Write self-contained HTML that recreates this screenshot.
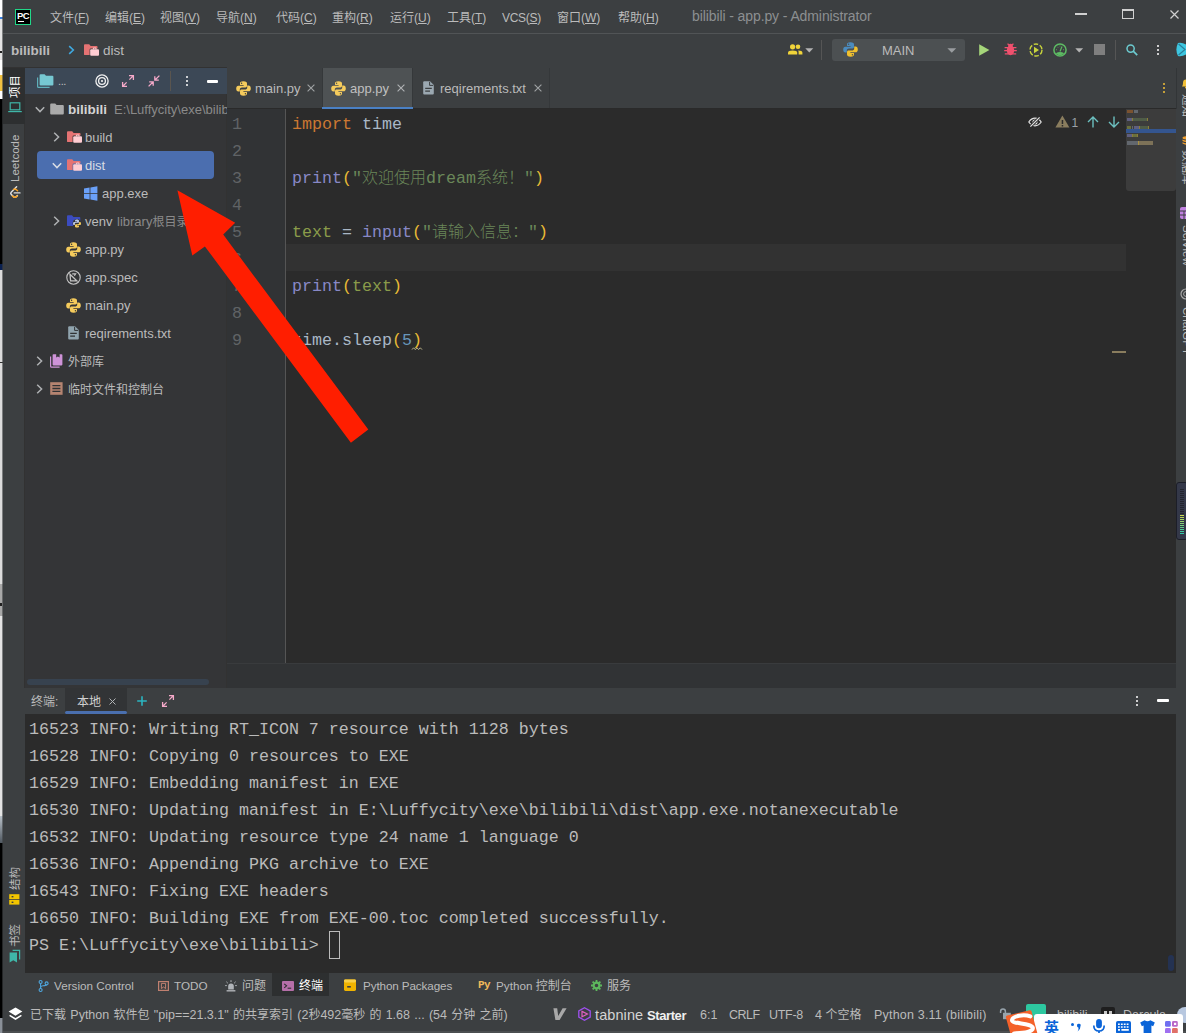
<!DOCTYPE html>
<html lang="zh-CN">
<head>
<meta charset="utf-8">
<title>bilibili - app.py - Administrator</title>
<style>
*{box-sizing:border-box;margin:0;padding:0}
html,body{width:1186px;height:1033px;overflow:hidden;background:#3c3f41}
body{position:relative;font-family:"Liberation Sans","Noto Sans CJK SC",sans-serif;font-size:13px;color:#bbbbbb}
.abs{position:absolute}
.t{position:absolute;white-space:nowrap;line-height:1}
svg{position:absolute;overflow:visible}
.mono{font-family:"Liberation Mono","Noto Sans CJK SC",monospace}
.m{font-size:12px;color:#bbbbbb}
.m u{text-decoration:underline;text-underline-offset:1px}
.v{transform-origin:0 0;transform:rotate(-90deg);line-height:12px;height:12px}
.f{font-size:13px;color:#bbbbbb}
.c{font-size:12px}
.ln{font-size:16.67px;line-height:27px;color:#606366}
.cl{font-size:16.67px;line-height:27px;color:#a9b7c6;white-space:pre}
.cj{font-family:"Noto Sans CJK SC",sans-serif;font-size:16px;font-weight:300;line-height:0}
.tl{font-size:16.67px;line-height:27px;color:#bbbbbb;white-space:pre}
.b{font-size:11.7px;color:#bbbbbb}
.s{font-size:12.5px;color:#bbbbbb}
.rv{transform-origin:0 0;transform:rotate(90deg);line-height:12px;height:12px;font-size:11.5px;color:#bbbbbb}
/* ---- structural blocks ---- */
#leftedge{left:0;top:0;width:3px;height:1033px;background:#e4e4e4;overflow:hidden}
#titlebar{left:3px;top:0;width:1183px;height:33px;background:#3c3f41}
#titlesep{left:3px;top:33px;width:1183px;height:1px;background:#515456}
#navbar{left:3px;top:34px;width:1183px;height:34px;background:#3c3f41}
#lstrip{left:3px;top:68px;width:22px;height:904px;background:#3c3f41}
#proj{left:24px;top:68px;width:203px;height:620px;background:#343537;border-left:1px solid #323232;border-right:1px solid #323232}
#projhead{left:25px;top:68px;width:202px;height:26px;background:#3c4856}
#tabbar{left:227px;top:68px;width:949px;height:41px;background:#3c3f41}
#editor{left:227px;top:109px;width:949px;height:554px;background:#2b2b2b}
#gutter{left:227px;top:109px;width:59px;height:554px;background:#313335}
#gutline{left:285px;top:109px;width:1px;height:554px;background:#555555}
#curline{left:286px;top:244px;width:840px;height:27px;background:#323232}
#rstrip{left:1176px;top:68px;width:10px;height:904px;background:#3c3f41}
#termhead{left:25px;top:688px;width:1151px;height:26px;background:#3c3f41}
#term{left:25px;top:714px;width:1151px;height:259px;background:#2b2b2b}
#bottombar{left:3px;top:973px;width:1183px;height:26px;background:#3c3f41}
#statusbar{left:3px;top:999px;width:1183px;height:34px;background:#3c3f41}
</style>
</head>
<body>
<div class="abs" id="titlebar"></div>
<div class="abs" id="titlesep"></div>
<div class="abs" id="navbar"></div>
<div class="abs" id="lstrip"></div>
<div class="abs" style="left:3px;top:67px;width:224px;height:1px;background:#323232"></div>
<div class="abs" id="proj"></div>
<div class="abs" id="projhead"></div>
<div class="abs" id="tabbar"></div>
<div class="abs" id="editor"></div>
<div class="abs" id="gutter"></div>
<div class="abs" id="gutline"></div>
<div class="abs" id="curline"></div>
<div class="abs" style="left:227px;top:663px;width:949px;height:25px;background:#313335;border-top:1px solid #393b3d"></div>
<div class="abs" id="rstrip"></div>
<div class="abs" id="termhead"></div>
<div class="abs" id="term"></div>
<div class="abs" id="bottombar"></div>
<div class="abs" id="statusbar"></div>
<div class="abs" id="leftedge"><div class="abs" style="left:0;top:0px;width:3px;height:19px;background:#ffffff"></div><div class="abs" style="left:0;top:19px;width:3px;height:41px;background:#e4e4e4"></div><div class="abs" style="left:0;top:60px;width:3px;height:15px;background:#ffffff"></div><div class="abs" style="left:0;top:75px;width:3px;height:16px;background:#f0c040"></div><div class="abs" style="left:0;top:91px;width:3px;height:8px;background:#ffffff"></div><div class="abs" style="left:0;top:99px;width:3px;height:165px;background:#000000"></div><div class="abs" style="left:0;top:264px;width:3px;height:6px;background:#0a2050"></div><div class="abs" style="left:0;top:270px;width:3px;height:314px;background:#dcdcdc"></div><div class="abs" style="left:0;top:584px;width:3px;height:32px;background:#a8a8a8"></div><div class="abs" style="left:0;top:616px;width:3px;height:200px;background:#e4e4e4"></div><div class="abs" style="left:0;top:843px;width:3px;height:175px;background:#000000"></div><div class="abs" style="left:0;top:1018px;width:3px;height:15px;background:#8a9098"></div><div class="abs" style="left:0;top:816px;width:3px;height:27px;background:linear-gradient(#b8c0c8,#505860)"></div><div class="abs" style="left:0;top:17px;width:3px;height:2px;background:#3a80e0"></div><div class="abs" style="left:0;top:51px;width:2px;height:2px;background:#202020"></div><div class="abs" style="left:0;top:362px;width:3px;height:1px;background:#303030"></div><div class="abs" style="left:0;top:603px;width:2px;height:3px;background:#202020"></div><div class="abs" style="left:2px;top:0;width:1px;height:1033px;background:rgba(60,63,65,0.6)"></div></div>
<!--TITLE-->
<div class="abs" style="left:15px;top:9px;width:16px;height:16px;background:#000;border:1px solid #21d789"></div>
<div class="t" style="left:17px;top:10.5px;font-size:9.5px;font-weight:bold;color:#fff;letter-spacing:-0.6px">PC</div>
<div class="abs" style="left:18px;top:21px;width:6px;height:1px;background:#fff"></div>
<div class="t m" style="left:50px;top:11.5px">文件(<u>F</u>)</div>
<div class="t m" style="left:105px;top:11.5px">编辑(<u>E</u>)</div>
<div class="t m" style="left:160px;top:11.5px">视图(<u>V</u>)</div>
<div class="t m" style="left:216px;top:11.5px">导航(<u>N</u>)</div>
<div class="t m" style="left:276px;top:11.5px">代码(<u>C</u>)</div>
<div class="t m" style="left:332px;top:11.5px">重构(<u>R</u>)</div>
<div class="t m" style="left:390px;top:11.5px">运行(<u>U</u>)</div>
<div class="t m" style="left:447px;top:11.5px">工具(<u>T</u>)</div>
<div class="t m" style="left:502px;top:11.5px;letter-spacing:-0.3px">VCS(<u>S</u>)</div>
<div class="t m" style="left:557px;top:11.5px">窗口(<u>W</u>)</div>
<div class="t m" style="left:618px;top:11.5px">帮助(<u>H</u>)</div>
<div class="t" style="left:692px;top:9.3px;font-size:14px;color:#8c8f91;letter-spacing:-0.1px">bilibili - app.py - Administrator</div>
<div class="abs" style="left:1075px;top:13px;width:12px;height:2px;background:#d0d0d0"></div>
<div class="abs" style="left:1122px;top:9px;width:12px;height:10px;border:1px solid #d0d0d0;border-top-width:2px"></div>
<svg style="left:1170px;top:10px" width="9" height="9" viewBox="0 0 9 9"><path d="M0.5 0.5L8.5 8.5M8.5 0.5L0.5 8.5" stroke="#d0d0d0" stroke-width="1.2" fill="none"/></svg>

<!--NAV-->
<div class="t" style="left:11px;top:44px;font-size:13.5px;font-weight:bold;color:#bbbbbb">bilibili</div>
<svg style="left:68px;top:45px" width="7" height="10" viewBox="0 0 7 10"><path d="M1.2 1.2L5.3 5L1.2 8.8" stroke="#3fa9e0" stroke-width="1.6" fill="none"/></svg>
<svg style="left:84px;top:44px" width="16" height="13" viewBox="0 0 16 13"><path d="M0 1.2Q0 0.3 0.9 0.3H5.2L6.6 1.9H12.6Q13.5 1.9 13.5 2.8V10.2Q13.5 11.1 12.6 11.1H0.9Q0 11.1 0 10.2Z" fill="#e57373"/><rect x="5.6" y="4.6" width="9.6" height="7.4" rx="1.2" fill="#3c3f41"/><rect x="6.2" y="5.2" width="8.8" height="6.6" rx="1" fill="#ffcdd2"/><path d="M9.4 5.4V4H12V5.4" stroke="#ffcdd2" stroke-width="1" fill="none"/></svg>
<div class="t" style="left:103px;top:44px;font-size:13.5px;color:#bbbbbb">dist</div>
<svg style="left:788px;top:44px" width="15" height="11" viewBox="0 0 15 11"><circle cx="4.6" cy="2.8" r="2.6" fill="#f0d43a"/><path d="M0 10.5V8.6Q0 6.4 4.6 6.4Q9.2 6.4 9.2 8.6V10.5Z" fill="#f0d43a"/><circle cx="10" cy="2.8" r="2.3" fill="#f0d43a"/><path d="M10.2 6.5Q14.4 6.6 14.4 8.6V10.5H10.6V8.4Q10.6 7.2 10.2 6.5Z" fill="#f0d43a"/></svg>
<svg style="left:805px;top:48px" width="9" height="5" viewBox="0 0 9 5"><path d="M0.3 0.3H8.3L4.3 4.6Z" fill="#b4b4b4"/></svg>
<div class="abs" style="left:821px;top:40px;width:1px;height:20px;background:#555555"></div>
<div class="abs" style="left:832px;top:39px;width:133px;height:22px;background:#4c5052;border-radius:3px"></div>
<svg style="left:843px;top:42px" width="15" height="15" viewBox="0 0 15 15"><path d="M7.4 0.2C4.6 0.2 4 1.2 4 2.4V4H7.6V4.7H2.4C1 4.7 0.2 5.8 0.2 7.6C0.2 9.4 1 10.5 2.4 10.5H3.8V8.6C3.8 7.3 4.8 6.4 6 6.4H9.4C10.4 6.4 11 5.7 11 4.8V2.4C11 1.2 10.2 0.2 7.4 0.2Z" fill="#4b8bbe"/><circle cx="5.6" cy="2.2" r="0.7" fill="#4c5052"/><path d="M7.6 14.8C10.4 14.8 11 13.8 11 12.6V11H7.4V10.3H12.6C14 10.3 14.8 9.2 14.8 7.4C14.8 5.6 14 4.5 12.6 4.5H11.2V6.4C11.2 7.7 10.2 8.6 9 8.6H5.6C4.6 8.6 4 9.3 4 10.2V12.6C4 13.8 4.8 14.8 7.6 14.8Z" fill="#f0c02e"/><circle cx="9.4" cy="12.8" r="0.7" fill="#4c5052"/></svg>
<div class="t" style="left:882px;top:44px;font-size:13px;color:#bbbbbb">MAIN</div>
<svg style="left:947px;top:48px" width="10" height="5" viewBox="0 0 10 5"><path d="M0.4 0.2H9.2L4.8 4.8Z" fill="#9a9da0"/></svg>
<svg style="left:979px;top:44px" width="11" height="12" viewBox="0 0 11 12"><path d="M0.2 0.2L10.4 6L0.2 11.8Z" fill="#a5d67a"/></svg>
<svg style="left:1004px;top:43px" width="13" height="13" viewBox="0 0 13 13"><ellipse cx="6.5" cy="7.4" rx="3.7" ry="4.8" fill="#f0506e"/><circle cx="6.5" cy="3" r="2.3" fill="#f0506e"/><path d="M0.6 4.6H12.4M0.2 7.6H12.8M0.8 10.8H12.2M3.6 0.6L5 2.2M9.4 0.6L8 2.2" stroke="#f0506e" stroke-width="1.3" fill="none"/></svg>
<svg style="left:1029px;top:43px" width="14" height="14" viewBox="0 0 14 14"><circle cx="7" cy="7" r="6" fill="none" stroke="#c8d43c" stroke-width="1.4" stroke-dasharray="4.6 1.7"/><path d="M5 3.8L10 7L5 10.2Z" fill="#c8d43c"/></svg>
<svg style="left:1053px;top:43px" width="14" height="14" viewBox="0 0 14 14"><circle cx="7" cy="7" r="6.1" fill="none" stroke="#5dbb63" stroke-width="1.5"/><path d="M2.8 10.2Q7 7.6 11.2 10.2Q9.6 12.2 7 12.2Q4.4 12.2 2.8 10.2Z" fill="#5dbb63"/><path d="M7 8.4L9 3.6" stroke="#5dbb63" stroke-width="1.2"/><path d="M3.2 6.6L4 6.9M4.4 3.9L5 4.5M10.8 6.6L10 6.9M7 2.6V3.4" stroke="#5dbb63" stroke-width="0.9"/></svg>
<svg style="left:1075px;top:48px" width="9" height="5" viewBox="0 0 9 5"><path d="M0.3 0.3H8.1L4.2 4.6Z" fill="#b4b4b4"/></svg>
<div class="abs" style="left:1094px;top:44px;width:11px;height:11px;background:#7f7f7f"></div>
<div class="abs" style="left:1115px;top:40px;width:1px;height:20px;background:#555555"></div>
<svg style="left:1126px;top:44px" width="12" height="12" viewBox="0 0 12 12"><circle cx="4.6" cy="4.6" r="3.6" fill="none" stroke="#6ccbd0" stroke-width="1.5"/><path d="M7.2 7.2L11.2 11.2" stroke="#6ccbd0" stroke-width="1.7"/></svg>
<div class="abs" style="left:1157px;top:45px;width:2px;height:2px;background:#fff;box-shadow:0 4px 0 #fff,0 8px 0 #fff;border-radius:1px"></div>
<svg style="left:1176px;top:42px" width="10" height="15" viewBox="0 0 10 15"><path d="M2 1Q6 0.2 10 2.6V12.4Q6 14.8 2 14Q0.4 11 0.4 7.5Q0.4 4 2 1Z" fill="#3dc6e0"/><path d="M2.6 2L9 7.5L2.6 13" stroke="#2b7f9a" stroke-width="1.2" fill="none"/></svg>

<!--LSTRIP-->
<div class="abs" style="left:3px;top:68px;width:22px;height:56px;background:#2d2f30"></div>
<div class="t v" style="left:9px;top:98px;font-size:11.5px;color:#ffffff">项目</div>
<svg style="left:8px;top:102px" width="14" height="11" viewBox="0 0 14 11"><rect x="2.2" y="0.8" width="9.6" height="7" fill="none" stroke="#3fb6a8" stroke-width="1.2"/><path d="M0.2 9.6H13.8" stroke="#3fb6a8" stroke-width="1.2"/></svg>
<div class="t v" style="left:9px;top:182px;font-size:11.5px;color:#bbbbbb">Leetcode</div>
<svg style="left:9px;top:186px" width="12" height="13" viewBox="0 0 12 13"><path d="M7.6 0.8L2.2 6.2Q1.2 7.3 2.2 8.4L4.6 10.8Q5.8 11.8 7 10.8L8.4 9.6" stroke="#e0e0e0" stroke-width="1.5" fill="none" stroke-linecap="round"/><path d="M5.2 6.9H11" stroke="#e0e0e0" stroke-width="1.4" stroke-linecap="round"/><path d="M4.8 3.4Q6 2.6 7.2 3.6L8.6 4.8" stroke="#f89f1b" stroke-width="1.4" fill="none" stroke-linecap="round"/><path d="M3.4 10Q5.8 12.6 8.2 10" stroke="#f89f1b" stroke-width="1.4" fill="none" stroke-linecap="round"/></svg>
<div class="t v" style="left:9px;top:890px;font-size:11.5px;color:#bbbbbb">结构</div>
<svg style="left:9px;top:894px" width="11" height="11" viewBox="0 0 11 11"><rect x="0.2" y="0.2" width="10.2" height="4.8" fill="#f2c500"/><rect x="0.2" y="5.8" width="10.2" height="4.8" fill="#f2c500"/><rect x="2.6" y="2" width="1.8" height="1.4" fill="#3c3f41"/><rect x="2.6" y="7.6" width="1.8" height="1.4" fill="#3c3f41"/></svg>
<div class="t v" style="left:9px;top:947px;font-size:11.5px;color:#bbbbbb">书签</div>
<svg style="left:9px;top:950px" width="12" height="13" viewBox="0 0 12 13"><path d="M3.6 0.4H10.6V9.6" stroke="#3fb6a8" stroke-width="1.2" fill="none"/><path d="M0.6 2.6H8V12.6L4.3 10.2L0.6 12.6Z" fill="#3fb6a8"/></svg>

<!--PROJ-->
<svg style="left:37px;top:74px" width="17" height="14" viewBox="0 0 17 14"><path d="M0.6 3.4V12.4Q0.6 13.4 1.6 13.4H12.6" stroke="#5fb0bb" stroke-width="1.2" fill="none"/><path d="M2.6 1.2Q2.6 0.2 3.6 0.2H7.6L9 1.8H15.4Q16.4 1.8 16.4 2.8V10.4Q16.4 11.4 15.4 11.4H3.6Q2.6 11.4 2.6 10.4Z" fill="#76c8d2"/></svg>
<div class="t" style="left:58px;top:76px;font-size:11px;color:#c0c0c0;letter-spacing:-0.4px">...</div>
<svg style="left:95px;top:74px" width="14" height="14" viewBox="0 0 14 14"><circle cx="7" cy="7" r="6.1" fill="none" stroke="#f0f0f0" stroke-width="1.3"/><circle cx="7" cy="7" r="3.4" fill="none" stroke="#f0f0f0" stroke-width="1.3"/><circle cx="7" cy="7" r="1.1" fill="#f0f0f0"/></svg>
<svg style="left:122px;top:75px" width="12" height="12" viewBox="0 0 12 12"><path d="M7 0.6H11.4V5M11.2 0.8L7.4 4.6M5 11.4H0.6V7M0.8 11.2L4.6 7.4" stroke="#f5a9c9" stroke-width="1.3" fill="none"/></svg>
<svg style="left:148px;top:75px" width="12" height="12" viewBox="0 0 12 12"><path d="M6.8 1.2V5.2H10.8M7 5L11.4 0.6M5.2 10.8V6.8H1.2M5 7L0.6 11.4" stroke="#f5a9c9" stroke-width="1.3" fill="none"/></svg>
<div class="abs" style="left:170px;top:71px;width:1px;height:20px;background:#5a554f"></div>
<div class="abs" style="left:186px;top:76px;width:2px;height:2px;background:#fff;box-shadow:0 4px 0 #fff,0 8px 0 #fff;border-radius:1px"></div>
<div class="abs" style="left:207px;top:80px;width:11px;height:3px;background:#fff;border-radius:1px"></div>
<div class="abs" style="left:27px;top:679px;width:182px;height:6px;background:#37424f;border-radius:3px"></div>
<div class="abs" style="left:37px;top:151px;width:177px;height:28px;background:#4b6eaf;border-radius:4px"></div>
<svg style="left:35px;top:106px" width="10" height="7" viewBox="0 0 10 7"><path d="M0.8 1.2L5 5.6L9.2 1.2" stroke="#afb1b3" stroke-width="1.5" fill="none"/></svg>
<svg style="left:50px;top:103px" width="14" height="12" viewBox="0 0 14 12"><path d="M0.2 1.4Q0.2 0.4 1.2 0.4H5.2L6.6 2H12.8Q13.8 2 13.8 3V10.6Q13.8 11.6 12.8 11.6H1.2Q0.2 11.6 0.2 10.6Z" fill="#aaaaaa"/></svg>
<div class="t" style="left:68px;top:103px;font-size:13.5px;font-weight:bold;color:#d4d4d4">bilibili</div>
<div class="abs" style="left:114px;top:100px;width:113px;height:18px;overflow:hidden"><div class="t" style="left:0;top:3px;font-size:13px;color:#8a8a8a">E:\Luffycity\exe\bilibili</div></div>
<svg style="left:53px;top:132px" width="7" height="10" viewBox="0 0 7 10"><path d="M1.2 0.8L5.6 5L1.2 9.2" stroke="#afb1b3" stroke-width="1.5" fill="none"/></svg><svg style="left:67px;top:131px" width="16" height="13" viewBox="0 0 16 13"><path d="M0 1.2Q0 0.3 0.9 0.3H5.2L6.6 1.9H12.6Q13.5 1.9 13.5 2.8V10.2Q13.5 11.1 12.6 11.1H0.9Q0 11.1 0 10.2Z" fill="#e57373"/><rect x="5.6" y="4.6" width="9.6" height="7.4" rx="1.2" fill="#313335"/><rect x="6.2" y="5.2" width="8.8" height="6.6" rx="1" fill="#ffcdd2"/><path d="M9.4 5.4V4H12V5.4" stroke="#ffcdd2" stroke-width="1" fill="none"/></svg>
<div class="t f" style="left:85px;top:131px">build</div>
<svg style="left:52px;top:162px" width="10" height="7" viewBox="0 0 10 7"><path d="M0.8 1.2L5 5.6L9.2 1.2" stroke="#d8dce4" stroke-width="1.5" fill="none"/></svg><svg style="left:67px;top:159px" width="16" height="13" viewBox="0 0 16 13"><path d="M0 1.2Q0 0.3 0.9 0.3H5.2L6.6 1.9H12.6Q13.5 1.9 13.5 2.8V10.2Q13.5 11.1 12.6 11.1H0.9Q0 11.1 0 10.2Z" fill="#e57373"/><rect x="5.6" y="4.6" width="9.6" height="7.4" rx="1.2" fill="#4b6eaf"/><rect x="6.2" y="5.2" width="8.8" height="6.6" rx="1" fill="#ffcdd2"/><path d="M9.4 5.4V4H12V5.4" stroke="#ffcdd2" stroke-width="1" fill="none"/></svg>
<div class="t f" style="left:85px;top:159px;color:#d8dce4">dist</div>
<svg style="left:84px;top:186px" width="14" height="15" viewBox="0 0 14 15"><path d="M0 2.6L5.6 1.6V7H0ZM6.4 1.4L13.4 0.2V7H6.4ZM0 7.8H5.6V13.4L0 12.4ZM6.4 7.8H13.4V14.8L6.4 13.6Z" fill="#6aa0f8"/></svg>
<div class="t f" style="left:102px;top:187px">app.exe</div>
<svg style="left:53px;top:216px" width="7" height="10" viewBox="0 0 7 10"><path d="M1.2 0.8L5.6 5L1.2 9.2" stroke="#afb1b3" stroke-width="1.5" fill="none"/></svg><svg style="left:67px;top:215px" width="15" height="13" viewBox="0 0 15 13"><path d="M0 1.2Q0 0.3 0.9 0.3H5L6.4 1.9H12.4Q13.3 1.9 13.3 2.8V10.2Q13.3 11.1 12.4 11.1H0.9Q0 11.1 0 10.2Z" fill="#3b4cc0"/><circle cx="10" cy="8.4" r="4.4" fill="#313335"/><path d="M9.9 4.4C8.4 4.4 8 5 8 5.6V6.5H10V6.9H7.2C6.4 6.9 6 7.5 6 8.5C6 9.5 6.4 10.1 7.2 10.1H7.9V9C7.9 8.3 8.4 7.8 9.1 7.8H11C11.6 7.8 12 7.4 12 6.9V5.6C12 5 11.4 4.4 9.9 4.4Z" fill="#b9c7e8"/><path d="M10.1 12.6C11.6 12.6 12 12 12 11.4V10.5H10V10.1H12.8C13.6 10.1 14 9.5 14 8.5C14 7.5 13.6 6.9 12.8 6.9H12.1V8C12.1 8.7 11.6 9.2 10.9 9.2H9C8.4 9.2 8 9.6 8 10.1V11.4C8 12 8.6 12.6 10.1 12.6Z" fill="#f5cb5c"/></svg>
<div class="t f" style="left:85px;top:215px">venv</div>
<div class="t f" style="left:117px;top:215px;color:#8a8a8a">library<span class="c">根目录</span></div>
<svg style="left:66px;top:242px" width="15" height="15" viewBox="0 0 15 15"><path d="M7.4 0.2C4.6 0.2 4 1.2 4 2.4V4H7.6V4.7H2.4C1 4.7 0.2 5.8 0.2 7.6C0.2 9.4 1 10.5 2.4 10.5H3.8V8.6C3.8 7.3 4.8 6.4 6 6.4H9.4C10.4 6.4 11 5.7 11 4.8V2.4C11 1.2 10.2 0.2 7.4 0.2Z" fill="#f5cb5c"/><circle cx="5.6" cy="2.2" r="0.7" fill="#313335"/><path d="M7.6 14.8C10.4 14.8 11 13.8 11 12.6V11H7.4V10.3H12.6C14 10.3 14.8 9.2 14.8 7.4C14.8 5.6 14 4.5 12.6 4.5H11.2V6.4C11.2 7.7 10.2 8.6 9 8.6H5.6C4.6 8.6 4 9.3 4 10.2V12.6C4 13.8 4.8 14.8 7.6 14.8Z" fill="#f5cb5c"/><circle cx="9.4" cy="12.8" r="0.7" fill="#313335"/></svg>
<div class="t f" style="left:85px;top:243px">app.py</div>
<svg style="left:66px;top:270px" width="15" height="15" viewBox="0 0 15 15"><circle cx="7.5" cy="7.5" r="6.7" fill="none" stroke="#c4c4c4" stroke-width="1.1"/><path d="M4 4.2L10.8 10.8H4.6Z" fill="none" stroke="#c4c4c4" stroke-width="1.3"/><path d="M6.2 3.8H9.6L8.4 5.8" fill="none" stroke="#c4c4c4" stroke-width="1.2"/></svg>
<div class="t f" style="left:85px;top:271px">app.spec</div>
<svg style="left:66px;top:298px" width="15" height="15" viewBox="0 0 15 15"><path d="M7.4 0.2C4.6 0.2 4 1.2 4 2.4V4H7.6V4.7H2.4C1 4.7 0.2 5.8 0.2 7.6C0.2 9.4 1 10.5 2.4 10.5H3.8V8.6C3.8 7.3 4.8 6.4 6 6.4H9.4C10.4 6.4 11 5.7 11 4.8V2.4C11 1.2 10.2 0.2 7.4 0.2Z" fill="#f5cb5c"/><circle cx="5.6" cy="2.2" r="0.7" fill="#313335"/><path d="M7.6 14.8C10.4 14.8 11 13.8 11 12.6V11H7.4V10.3H12.6C14 10.3 14.8 9.2 14.8 7.4C14.8 5.6 14 4.5 12.6 4.5H11.2V6.4C11.2 7.7 10.2 8.6 9 8.6H5.6C4.6 8.6 4 9.3 4 10.2V12.6C4 13.8 4.8 14.8 7.6 14.8Z" fill="#f5cb5c"/><circle cx="9.4" cy="12.8" r="0.7" fill="#313335"/></svg>
<div class="t f" style="left:85px;top:299px">main.py</div>
<svg style="left:68px;top:326px" width="11" height="14" viewBox="0 0 11 14"><path d="M1.2 0.2H7L10.8 4V12.6Q10.8 13.6 9.8 13.6H1.2Q0.2 13.6 0.2 12.6V1.2Q0.2 0.2 1.2 0.2Z" fill="#90a4ae"/><path d="M6.6 0.8V4.4H10.2" stroke="#313335" stroke-width="1" fill="none"/><path d="M2.2 7.4H8.8M2.2 10.2H7" stroke="#313335" stroke-width="1.3"/></svg>
<div class="t f" style="left:85px;top:327px">reqirements.txt</div>
<svg style="left:36px;top:356px" width="7" height="10" viewBox="0 0 7 10"><path d="M1.2 0.8L5.6 5L1.2 9.2" stroke="#afb1b3" stroke-width="1.5" fill="none"/></svg><svg style="left:50px;top:354px" width="13" height="14" viewBox="0 0 13 14"><path d="M0.6 2.6V12.2Q0.6 13.2 1.6 13.2H9.6" stroke="#ce93d8" stroke-width="1.2" fill="none"/><path d="M2.6 1Q2.6 0.2 3.4 0.2H6.2V3.6L7.9 2.6L9.6 3.6V0.2H11.6Q12.4 0.2 12.4 1V10.6Q12.4 11.4 11.6 11.4H3.4Q2.6 11.4 2.6 10.6Z" fill="#ce93d8"/></svg>
<div class="t c" style="left:68px;top:356px">外部库</div>
<svg style="left:36px;top:384px" width="7" height="10" viewBox="0 0 7 10"><path d="M1.2 0.8L5.6 5L1.2 9.2" stroke="#afb1b3" stroke-width="1.5" fill="none"/></svg><svg style="left:50px;top:382px" width="13" height="13" viewBox="0 0 13 13"><rect x="0.2" y="0.2" width="12.4" height="12.6" fill="#b58471"/><path d="M2.4 3.6H10.4M2.4 6.5H10.4M2.4 9.4H10.4" stroke="#313335" stroke-width="1.3"/></svg>
<div class="t c" style="left:68px;top:384px">临时文件和控制台</div>

<!--TABS-->
<div class="abs" style="left:227px;top:108px;width:949px;height:1px;background:#2a2a2a"></div>
<div class="abs" style="left:322px;top:68px;width:91px;height:41px;background:#4e5254"></div>
<div class="abs" style="left:322px;top:107px;width:91px;height:2px;background:#4a80c4"></div>
<div class="abs" style="left:322px;top:68px;width:1px;height:39px;background:#35383a"></div>
<div class="abs" style="left:412px;top:68px;width:1px;height:39px;background:#35383a"></div>
<div class="abs" style="left:549px;top:68px;width:1px;height:40px;background:#35383a"></div>
<svg style="left:236px;top:81px" width="15" height="15" viewBox="0 0 15 15"><path d="M7.4 0.2C4.6 0.2 4 1.2 4 2.4V4H7.6V4.7H2.4C1 4.7 0.2 5.8 0.2 7.6C0.2 9.4 1 10.5 2.4 10.5H3.8V8.6C3.8 7.3 4.8 6.4 6 6.4H9.4C10.4 6.4 11 5.7 11 4.8V2.4C11 1.2 10.2 0.2 7.4 0.2Z" fill="#f5cb5c"/><circle cx="5.6" cy="2.2" r="0.7" fill="#3c3f41"/><path d="M7.6 14.8C10.4 14.8 11 13.8 11 12.6V11H7.4V10.3H12.6C14 10.3 14.8 9.2 14.8 7.4C14.8 5.6 14 4.5 12.6 4.5H11.2V6.4C11.2 7.7 10.2 8.6 9 8.6H5.6C4.6 8.6 4 9.3 4 10.2V12.6C4 13.8 4.8 14.8 7.6 14.8Z" fill="#f5cb5c"/><circle cx="9.4" cy="12.8" r="0.7" fill="#3c3f41"/></svg><div class="t f" style="left:255px;top:82px">main.py</div><svg style="left:307px;top:84px" width="8" height="8" viewBox="0 0 8 8"><path d="M0.6 0.6L7.4 7.4M7.4 0.6L0.6 7.4" stroke="#a0a3a5" stroke-width="1.1" fill="none"/></svg>
<svg style="left:331px;top:81px" width="15" height="15" viewBox="0 0 15 15"><path d="M7.4 0.2C4.6 0.2 4 1.2 4 2.4V4H7.6V4.7H2.4C1 4.7 0.2 5.8 0.2 7.6C0.2 9.4 1 10.5 2.4 10.5H3.8V8.6C3.8 7.3 4.8 6.4 6 6.4H9.4C10.4 6.4 11 5.7 11 4.8V2.4C11 1.2 10.2 0.2 7.4 0.2Z" fill="#f5cb5c"/><circle cx="5.6" cy="2.2" r="0.7" fill="#4e5254"/><path d="M7.6 14.8C10.4 14.8 11 13.8 11 12.6V11H7.4V10.3H12.6C14 10.3 14.8 9.2 14.8 7.4C14.8 5.6 14 4.5 12.6 4.5H11.2V6.4C11.2 7.7 10.2 8.6 9 8.6H5.6C4.6 8.6 4 9.3 4 10.2V12.6C4 13.8 4.8 14.8 7.6 14.8Z" fill="#f5cb5c"/><circle cx="9.4" cy="12.8" r="0.7" fill="#4e5254"/></svg><div class="t f" style="left:350px;top:82px;color:#c0c0c0">app.py</div><svg style="left:397px;top:84px" width="8" height="8" viewBox="0 0 8 8"><path d="M0.6 0.6L7.4 7.4M7.4 0.6L0.6 7.4" stroke="#b0b3b5" stroke-width="1.1" fill="none"/></svg>
<svg style="left:423px;top:81px" width="11" height="14" viewBox="0 0 11 14"><path d="M1.2 0.2H7L10.8 4V12.6Q10.8 13.6 9.8 13.6H1.2Q0.2 13.6 0.2 12.6V1.2Q0.2 0.2 1.2 0.2Z" fill="#9ba8b1"/><path d="M6.6 0.8V4.4H10.2" stroke="#3c3f41" stroke-width="1" fill="none"/><path d="M2.2 7.4H8.8M2.2 10.2H7" stroke="#3c3f41" stroke-width="1.3"/></svg><div class="t f" style="left:440px;top:82px">reqirements.txt</div><svg style="left:534px;top:84px" width="8" height="8" viewBox="0 0 8 8"><path d="M0.6 0.6L7.4 7.4M7.4 0.6L0.6 7.4" stroke="#a0a3a5" stroke-width="1.1" fill="none"/></svg>
<div class="abs" style="left:1163px;top:83px;width:2px;height:2px;background:#f2c037;box-shadow:0 4px 0 #f2c037,0 8px 0 #f2c037;border-radius:1px"></div>

<!--CODE-->
<div class="t mono ln" style="left:232px;top:111px">1</div><div class="t mono cl" style="left:292px;top:111px"><span style="color:#cc7832">import</span> <span style="color:#a9b7c6">time</span></div>
<div class="t mono ln" style="left:232px;top:138px">2</div>
<div class="t mono ln" style="left:232px;top:165px">3</div><div class="t mono cl" style="left:292px;top:165px"><span style="color:#8888c6">print</span><span style="color:#e8ba36">(</span><span style="color:#6a8759">"<span class="cj">欢迎使用</span>dream<span class="cj">系统！</span>"</span><span style="color:#e8ba36">)</span></div>
<div class="t mono ln" style="left:232px;top:192px">4</div>
<div class="t mono ln" style="left:232px;top:219px">5</div><div class="t mono cl" style="left:292px;top:219px"><span style="color:#8a9b4a">text</span><span style="color:#a9b7c6"> = </span><span style="color:#8888c6">input</span><span style="color:#e8ba36">(</span><span style="color:#6a8759">"<span class="cj">请输入信息：</span>"</span><span style="color:#e8ba36">)</span></div>
<div class="t mono ln" style="left:232px;top:246px">6</div>
<div class="t mono ln" style="left:232px;top:273px">7</div><div class="t mono cl" style="left:292px;top:273px"><span style="color:#8888c6">print</span><span style="color:#e8ba36">(</span><span style="color:#8a9b4a">text</span><span style="color:#e8ba36">)</span></div>
<div class="t mono ln" style="left:232px;top:300px">8</div>
<div class="t mono ln" style="left:232px;top:327px">9</div><div class="t mono cl" style="left:292px;top:327px"><span style="color:#a9b7c6">time.sleep</span><span style="color:#e8ba36">(</span><span style="color:#6897bb">5</span><span style="color:#e8ba36">)</span></div>
<svg style="left:412px;top:346.5px" width="10" height="4" viewBox="0 0 10 4"><path d="M0 2.6L1.6 0.8L3.3 2.6L5 0.8L6.6 2.6L8.3 0.8L10 2.6" stroke="#bdb58a" stroke-width="1" fill="none"/></svg>
<div class="abs" style="left:1126px;top:109px;width:50px;height:82px;background:#3c3c3c;border-radius:0 0 3px 3px"></div>
<div class="abs" style="left:1127px;top:110px;width:6px;height:3px;background:#7a5230"></div><div class="abs" style="left:1134px;top:110px;width:4px;height:3px;background:#62676e"></div><div class="abs" style="left:1127px;top:118px;width:5px;height:3px;background:#5f5f80"></div><div class="abs" style="left:1132px;top:118px;width:1px;height:3px;background:#8a7c3a"></div><div class="abs" style="left:1133px;top:118px;width:14px;height:3px;background:#4f5c47"></div><div class="abs" style="left:1147px;top:118px;width:1px;height:3px;background:#8a7c3a"></div><div class="abs" style="left:1127px;top:126px;width:4px;height:3px;background:#6a703e"></div><div class="abs" style="left:1132px;top:126px;width:1px;height:3px;background:#62676e"></div><div class="abs" style="left:1134px;top:126px;width:5px;height:3px;background:#5f5f80"></div><div class="abs" style="left:1139px;top:126px;width:1px;height:3px;background:#8a7c3a"></div><div class="abs" style="left:1140px;top:126px;width:8px;height:3px;background:#4f5c47"></div><div class="abs" style="left:1148px;top:126px;width:1px;height:3px;background:#8a7c3a"></div><div class="abs" style="left:1126px;top:129px;width:50px;height:4px;background:#34558f"></div><div class="abs" style="left:1127px;top:134px;width:5px;height:3px;background:#5f5f80"></div><div class="abs" style="left:1132px;top:134px;width:1px;height:3px;background:#8a7c3a"></div><div class="abs" style="left:1133px;top:134px;width:4px;height:3px;background:#6a703e"></div><div class="abs" style="left:1137px;top:134px;width:1px;height:3px;background:#8a7c3a"></div><div class="abs" style="left:1127px;top:141px;width:11px;height:4px;background:#62676e"></div><div class="abs" style="left:1138px;top:141px;width:1px;height:4px;background:#a89040"></div><div class="abs" style="left:1139px;top:141px;width:14px;height:4px;background:#7d7258"></div>
<svg style="left:1028px;top:116px" width="14" height="12" viewBox="0 0 14 12"><path d="M0.8 6Q3.4 2.2 7 2.2Q10.6 2.2 13.2 6Q10.6 9.8 7 9.8Q3.4 9.8 0.8 6Z" fill="none" stroke="#e4e4e4" stroke-width="1.2"/><circle cx="7" cy="6" r="2" fill="none" stroke="#e4e4e4" stroke-width="1.1"/><path d="M2.2 10.8L11.8 1.2" stroke="#2b2b2b" stroke-width="3"/><path d="M2.4 10.6L11.6 1.4" stroke="#e4e4e4" stroke-width="1.2"/></svg>
<svg style="left:1055px;top:115px" width="15" height="13" viewBox="0 0 15 13"><path d="M7.4 0.6L14.4 12.6H0.4Z" fill="#8a7d5e"/><rect x="6.7" y="5" width="1.5" height="4" fill="#2b2b2b"/><rect x="6.7" y="10" width="1.5" height="1.5" fill="#2b2b2b"/></svg>
<div class="t" style="left:1071.5px;top:116.5px;font-size:12px;color:#9aa0a8">1</div>
<svg style="left:1087px;top:116px" width="12" height="12" viewBox="0 0 12 12"><path d="M6 11.4V1.2M1 6L6 1L11 6" stroke="#6cc0c0" stroke-width="1.4" fill="none"/></svg>
<svg style="left:1108px;top:116px" width="12" height="12" viewBox="0 0 12 12"><path d="M6 0.6V10.8M1 6L6 11L11 6" stroke="#6cc0c0" stroke-width="1.4" fill="none"/></svg>
<div class="abs" style="left:1112px;top:351px;width:14px;height:2px;background:#8a7d5e"></div>

<!--RSTRIP-->
<div class="abs" style="left:1176px;top:68px;width:1px;height:41px;background:#323537"></div>
<svg style="left:1181px;top:79px" width="10" height="10" viewBox="0 0 10 10"><path d="M1 7.4Q2 6.4 2 4Q2 0.6 5 0.6Q8 0.6 8 4Q8 6.4 9 7.4Z" fill="#f2c037"/><circle cx="5" cy="8.6" r="1" fill="#f2c037"/></svg>
<svg style="left:1182px;top:136px" width="9" height="9" viewBox="0 0 9 9"><ellipse cx="4.5" cy="1.8" rx="4" ry="1.6" fill="#f0a030"/><path d="M0.5 3.4Q4.5 5.6 8.5 3.4V5Q4.5 7.2 0.5 5ZM0.5 6.2Q4.5 8.4 8.5 6.2V7.6Q4.5 9.8 0.5 7.6Z" fill="#f0a030"/></svg>
<svg style="left:1180px;top:207px" width="12" height="12" viewBox="0 0 12 12"><rect x="0" y="0" width="12" height="12" rx="2" fill="#c080e0"/><path d="M0 4H12M4 4V12M8 4V12M0 8H12" stroke="#3c3f41" stroke-width="1"/></svg>
<svg style="left:1180px;top:288px" width="12" height="12" viewBox="0 0 12 12"><circle cx="6" cy="6" r="5" fill="none" stroke="#a8a8a8" stroke-width="1.2"/><circle cx="6" cy="6" r="2.4" fill="none" stroke="#a8a8a8" stroke-width="1"/></svg>
<div class="t rv" style="left:1192.5px;top:94px;font-size:11.5px">通知</div>
<div class="t rv" style="left:1192.5px;top:150px;font-size:11.5px">数据库</div>
<div class="t rv" style="left:1192.5px;top:225px;">SciView</div>
<div class="t rv" style="left:1192.5px;top:307px;">ChatGPT</div>
<div class="abs" style="left:1176px;top:482px;width:12px;height:58px;background:#343849;border:1px solid #1c1e28;border-radius:3px"></div>
<div class="abs" style="left:1180px;top:489px;width:4px;height:1px;background:#23252e"></div><div class="abs" style="left:1180px;top:491px;width:4px;height:1px;background:#23252e"></div><div class="abs" style="left:1180px;top:493px;width:4px;height:1px;background:#23252e"></div><div class="abs" style="left:1180px;top:495px;width:4px;height:1px;background:#23252e"></div><div class="abs" style="left:1180px;top:497px;width:4px;height:1px;background:#23252e"></div><div class="abs" style="left:1180px;top:499px;width:4px;height:1px;background:#23252e"></div><div class="abs" style="left:1180px;top:501px;width:4px;height:1px;background:#23252e"></div><div class="abs" style="left:1180px;top:503px;width:4px;height:1px;background:#23252e"></div><div class="abs" style="left:1180px;top:505px;width:4px;height:1px;background:#23252e"></div><div class="abs" style="left:1180px;top:507px;width:4px;height:1px;background:#23252e"></div><div class="abs" style="left:1180px;top:509px;width:4px;height:1px;background:#23252e"></div><div class="abs" style="left:1180px;top:511px;width:4px;height:1px;background:#23252e"></div><div class="abs" style="left:1180px;top:513px;width:4px;height:1px;background:#23252e"></div><div class="abs" style="left:1180px;top:515px;width:4px;height:1px;background:#c8d850"></div><div class="abs" style="left:1180px;top:517px;width:4px;height:1px;background:#b7d659"></div><div class="abs" style="left:1180px;top:519px;width:4px;height:1px;background:#a6d463"></div><div class="abs" style="left:1180px;top:521px;width:4px;height:1px;background:#95d26d"></div><div class="abs" style="left:1180px;top:523px;width:4px;height:1px;background:#84d077"></div><div class="abs" style="left:1180px;top:525px;width:4px;height:1px;background:#73cf80"></div><div class="abs" style="left:1180px;top:527px;width:4px;height:1px;background:#62cd8a"></div><div class="abs" style="left:1180px;top:529px;width:4px;height:1px;background:#51cb94"></div><div class="abs" style="left:1180px;top:531px;width:4px;height:1px;background:#40c99e"></div><div class="abs" style="left:1180px;top:533px;width:4px;height:1px;background:#30c8a8"></div>

<!--TERM-->
<div class="abs" style="left:65px;top:688px;width:62px;height:26px;background:#323436"></div>
<div class="abs" style="left:65px;top:711px;width:62px;height:3px;background:#4a6fae;border-radius:2px"></div>
<div class="t c" style="left:31px;top:696px;color:#bbbbbb">终端:</div>
<div class="t c" style="left:77px;top:696px;color:#d0d0d0">本地</div>
<svg style="left:109px;top:698px" width="7" height="7" viewBox="0 0 7 7"><path d="M0.5 0.5L6.5 6.5M6.5 0.5L0.5 6.5" stroke="#b0b3b5" stroke-width="1" fill="none"/></svg>
<svg style="left:137px;top:696px" width="10" height="10" viewBox="0 0 10 10"><path d="M5 0.2V9.8M0.2 5H9.8" stroke="#2bb5c0" stroke-width="1.6" fill="none"/></svg>
<svg style="left:162px;top:695px" width="12" height="12" viewBox="0 0 12 12"><path d="M7 0.6H11.4V5M11.2 0.8L7.4 4.6M5 11.4H0.6V7M0.8 11.2L4.6 7.4" stroke="#f5a9c9" stroke-width="1.3" fill="none"/></svg>
<div class="abs" style="left:1136px;top:696px;width:2px;height:2px;background:#fff;box-shadow:0 4px 0 #fff,0 8px 0 #fff;border-radius:1px"></div>
<div class="abs" style="left:1157px;top:699px;width:12px;height:3px;background:#fff;border-radius:1px"></div>
<div class="abs" style="left:1168px;top:955px;width:6px;height:16px;background:#243252;border-radius:3px"></div>
<div class="t mono tl" style="left:29px;top:716px">16523 INFO: Writing RT_ICON 7 resource with 1128 bytes</div>
<div class="t mono tl" style="left:29px;top:743px">16528 INFO: Copying 0 resources to EXE</div>
<div class="t mono tl" style="left:29px;top:770px">16529 INFO: Embedding manifest in EXE</div>
<div class="t mono tl" style="left:29px;top:797px">16530 INFO: Updating manifest in E:\Luffycity\exe\bilibili\dist\app.exe.notanexecutable</div>
<div class="t mono tl" style="left:29px;top:824px">16532 INFO: Updating resource type 24 name 1 language 0</div>
<div class="t mono tl" style="left:29px;top:851px">16536 INFO: Appending PKG archive to EXE</div>
<div class="t mono tl" style="left:29px;top:878px">16543 INFO: Fixing EXE headers</div>
<div class="t mono tl" style="left:29px;top:905px">16650 INFO: Building EXE from EXE-00.toc completed successfully.</div>
<div class="t mono tl" style="left:29px;top:932px">PS E:\Luffycity\exe\bilibili&gt; </div>
<div class="abs" style="left:329px;top:931px;width:11px;height:28px;border:1px solid #bbbbbb"></div>

<!--BOTTOM-->
<div class="abs" style="left:272px;top:973px;width:57px;height:23px;background:#2d2f30"></div>
<svg style="left:38px;top:980px" width="11" height="12" viewBox="0 0 11 12"><circle cx="2.6" cy="2" r="1.5" fill="none" stroke="#4fa8e0" stroke-width="1.1"/><circle cx="2.6" cy="10" r="1.5" fill="none" stroke="#4fa8e0" stroke-width="1.1"/><circle cx="8.6" cy="3.4" r="1.5" fill="none" stroke="#4fa8e0" stroke-width="1.1"/><path d="M2.6 3.5V8.5M2.6 7.4Q2.8 6 5 5.8Q8.4 5.6 8.6 4.9" stroke="#4fa8e0" stroke-width="1.1" fill="none"/></svg>
<div class="t b" style="left:54px;top:980px">Version Control</div>
<svg style="left:158px;top:981px" width="11" height="10" viewBox="0 0 11 10"><rect x="0.6" y="0.6" width="9.8" height="8.8" fill="none" stroke="#c08070" stroke-width="1.2"/><path d="M3.4 2.4H7.6V7.6L5.5 6L3.4 7.6Z" fill="none" stroke="#c08070" stroke-width="1"/></svg>
<div class="t b" style="left:174px;top:980px">TODO</div>
<svg style="left:225px;top:980px" width="12" height="12" viewBox="0 0 12 12"><path d="M3.2 9.6V6.4Q3.2 3.6 6 3.6Q8.8 3.6 8.8 6.4V9.6Z" fill="#b0b4b8"/><path d="M1.6 10.8H10.4" stroke="#b0b4b8" stroke-width="1.4"/><path d="M6 0.2V2M1.4 1.8L2.8 3.2M10.6 1.8L9.2 3.2M0.2 5.6H1.8M11.8 5.6H10.2" stroke="#b0b4b8" stroke-width="1"/></svg>
<div class="t c" style="left:242px;top:980px;color:#bbbbbb">问题</div>
<svg style="left:282px;top:981px" width="12" height="10" viewBox="0 0 12 10"><rect x="0" y="0" width="12" height="10" rx="1" fill="#b56fa8"/><path d="M2.2 2.8L4.6 4.8L2.2 6.8" stroke="#2d2f30" stroke-width="1.1" fill="none"/><path d="M5.6 7.2H9.2" stroke="#2d2f30" stroke-width="1.1"/></svg>
<div class="t c" style="left:299px;top:980px;color:#ffffff">终端</div>
<svg style="left:344px;top:979px" width="12" height="12" viewBox="0 0 12 12"><rect x="0" y="0.4" width="12" height="11.6" rx="1.4" fill="#f0b400"/><rect x="0" y="0.4" width="12" height="3" rx="1.4" fill="#f8d048"/><rect x="3.2" y="7" width="3.6" height="1.6" fill="#3c3f41"/></svg>
<div class="t b" style="left:363px;top:980px;letter-spacing:-0.12px">Python Packages</div>
<div class="t" style="left:478px;top:980px;font-size:11px;font-weight:bold;color:#f0b85a;letter-spacing:-0.5px;font-family:'Liberation Mono',monospace">Py</div>
<div class="t b" style="left:496px;top:980px">Python <span class="c">控制台</span></div>
<svg style="left:591px;top:980px" width="11" height="11" viewBox="0 0 11 11"><circle cx="5.5" cy="5.5" r="2.9" fill="none" stroke="#5db85d" stroke-width="2.2"/><path d="M5.5 0V11M0 5.5H11M1.6 1.6L9.4 9.4M9.4 1.6L1.6 9.4" stroke="#5db85d" stroke-width="1.8" stroke-dasharray="1.9 7.2"/></svg>
<div class="t c" style="left:607px;top:980px;color:#bbbbbb">服务</div>

<!--STATUS-->
<div class="abs" style="left:3px;top:1031px;width:1183px;height:2px;background:#4b4e50"></div>
<svg style="left:8px;top:1007px" width="15" height="14" viewBox="0 0 15 14"><path d="M7.5 0.4L14.4 4.6L7.5 8.8L0.6 4.6Z" fill="#ffffff"/><path d="M1.6 8.4L7.5 12L13.4 8.4" stroke="#ffffff" stroke-width="1.5" fill="none"/></svg>
<div class="t s" style="left:30px;top:1008.5px;word-spacing:0.8px"><span class="c">已下载</span> Python <span class="c">软件包</span> "pip==21.3.1" <span class="c">的共享索引</span> (2<span class="c">秒</span>492<span class="c">毫秒 的</span> 1.68 ... (54 <span class="c">分钟 之前</span>)</div>
<svg style="left:553px;top:1008px" width="14" height="12" viewBox="0 0 14 12"><path d="M0.4 0.2H4.2L5.2 8L9.6 0.2H13.6L6.6 12H2.4Z" fill="#a8a8a8"/></svg>
<svg style="left:578px;top:1007px" width="13" height="14" viewBox="0 0 13 14"><path d="M6.5 0.8L12.2 4V10L6.5 13.2L0.8 10V4Z" fill="none" stroke="#a050f0" stroke-width="1.3"/><path d="M4 4.4L9.4 7L4 9.8Z" fill="none" stroke="#e060c0" stroke-width="1.2"/></svg>
<div class="t" style="left:595px;top:1007.5px;font-size:14.5px;color:#d4d4d4;letter-spacing:0.1px">tabnine</div>
<div class="t" style="left:647px;top:1009px;font-size:13px;font-weight:bold;color:#f0f0f0;letter-spacing:-0.4px">Starter</div>
<div class="t s" style="left:700px;top:1008.5px">6:1</div>
<div class="t s" style="left:729px;top:1008.5px;letter-spacing:-0.5px">CRLF</div>
<div class="t s" style="left:769px;top:1008.5px;letter-spacing:-0.3px">UTF-8</div>
<div class="t s" style="left:815px;top:1008.5px">4 <span class="c">个空格</span></div>
<div class="t s" style="left:874px;top:1008.5px;letter-spacing:0.2px">Python 3.11 (bilibili)</div>
<svg style="left:999px;top:1008px" width="12" height="12" viewBox="0 0 12 12"><path d="M1.6 5V3.4Q1.6 1 4 1Q6.4 1 6.4 3.4V5.4" stroke="#98a4ac" stroke-width="1.5" fill="none"/><rect x="4" y="4.8" width="7.8" height="6.4" fill="#98a4ac"/></svg>
<div class="abs" style="left:1026px;top:1004px;width:20px;height:20px;background:#2dc8a0;border-radius:2px"></div>
<div class="t s" style="left:1057px;top:1008.5px">bilibili</div>
<div class="abs" style="left:1101px;top:1007px;width:14px;height:14px;background:#1e1e1e;border-radius:2px"></div>
<div class="abs" style="left:1104px;top:1011px;width:3px;height:4px;background:#c8c8c8"></div>
<div class="abs" style="left:1109px;top:1011px;width:3px;height:4px;background:#c8c8c8"></div>
<div class="t s" style="left:1123px;top:1008.5px">Darcula</div>
<div class="abs" style="left:1177px;top:1007px;width:16px;height:16px;background:#b8c8e0;border-radius:8px"></div>
<div class="abs" style="left:1034px;top:1014px;width:149px;height:19px;background:#ffffff;border-radius:3px 3px 0 0"></div>
<svg style="left:1004px;top:1008px" width="36" height="25" viewBox="0 0 36 25"><path d="M3.2 7.4L25.6 2.3Q27.2 2 27.6 3.6L33.3 25H6.2L1.9 9.4Q1.6 7.8 3.2 7.4Z" fill="#f4612a"/><path d="M26.4 8.4C20 6 8.6 7.8 8 12C7.6 16.2 27 14.6 28.8 19.6C29.8 23.8 20 24.8 10 25.4" stroke="#ffffff" stroke-width="4" fill="none" stroke-linecap="round"/></svg>
<div class="t" style="left:1044px;top:1019px;font-size:15px;font-weight:bold;color:#0a64d8;font-family:'Noto Sans CJK SC',sans-serif">英</div>
<div class="abs" style="left:1071px;top:1023px;width:3px;height:3px;border-radius:2px;background:#0a64d8"></div>
<svg style="left:1076px;top:1024px" width="6" height="8" viewBox="0 0 6 8"><path d="M1 1.8A1.8 1.8 0 1 1 4.4 2.4Q4.8 5 1.6 7.4Q3 5 2.4 3.6Q1 3.4 1 1.8Z" fill="#0a64d8"/></svg>
<svg style="left:1093px;top:1019px" width="12" height="14" viewBox="0 0 12 14"><rect x="3.1" y="0" width="5.8" height="9.2" rx="2.9" fill="#0a64d8"/><path d="M0.8 6.4Q0.8 12 6 12Q11.2 12 11.2 6.4" stroke="#0a64d8" stroke-width="1.7" fill="none"/><path d="M6 12V14" stroke="#0a64d8" stroke-width="1.7"/></svg>
<svg style="left:1116px;top:1021px" width="15" height="12" viewBox="0 0 15 12"><rect x="0" y="0" width="15" height="12.6" rx="1.8" fill="#0a64d8"/><path d="M2 3.2H13.4M2 6H13.4" stroke="#ffffff" stroke-width="1.6" stroke-dasharray="1.8 1.1"/><path d="M2 8.9H4M5.4 8.9H12.8" stroke="#ffffff" stroke-width="1.6"/></svg>
<svg style="left:1140px;top:1020px" width="15" height="13" viewBox="0 0 15 13"><path d="M4.6 0.2Q7.5 2.4 10.4 0.2L14.8 2.6L13.2 6.2L11.4 5.4V13H3.6V5.4L1.8 6.2L0.2 2.6Z" fill="#0a64d8"/></svg>
<svg style="left:1165px;top:1021px" width="13" height="12" viewBox="0 0 13 12"><rect x="0" y="0" width="5.8" height="5.8" rx="1.4" fill="#6f6ff0"/><rect x="7" y="0" width="5.8" height="5.8" rx="1.4" fill="#b868c8"/><rect x="9" y="1.8" width="2.2" height="2.2" fill="#ffffff"/><rect x="0" y="7" width="5.8" height="5.8" rx="1.4" fill="#a070f0"/><rect x="7" y="7" width="5.8" height="5.8" rx="1.4" fill="#e07068"/></svg>

<!--ARROW-->
<svg style="left:0;top:0" width="1186" height="1033" viewBox="0 0 1186 1033"><path d="M177.4 190.2L235.2 222.8L223.2 234.6L368.3 429.6L350.9 442.8L204.9 246.4L192.3 255.6Z" fill="#ff1e00"/></svg>

</body>
</html>
